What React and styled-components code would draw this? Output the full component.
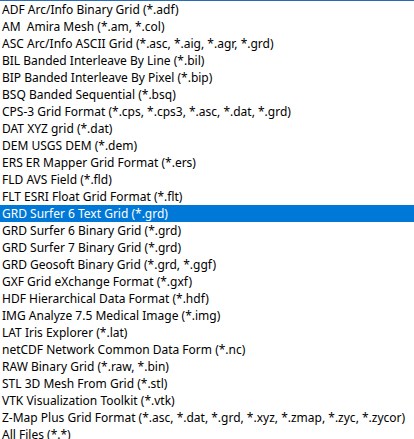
import React from 'react'
import styled, { createGlobalStyle, css } from 'styled-components'

const GlobalStyle = createGlobalStyle`
    html, body {
        margin: 0;
        padding: 0;
        background: #ffffff;
    }
`

const List = styled.ul`
    list-style: none;
    margin: 0;
    padding: 0;
    width: 414px;
    height: 439px;
    overflow: hidden;
    box-sizing: border-box;
    border-top: 1px solid #2a6cb3;
    background: #ffffff;
    font-family: "Noto Sans", "Open Sans", sans-serif;
    font-size: 12px;
`

const Item = styled.li`
    height: 17px;
    line-height: 17px;
    padding: 0 0 0 2px;
    white-space: pre;
    color: #000000;
    ${p => p.selected && css`
        background: #0078d7;
        color: #ffffff;
    `}
`

const formats = [
    'ADF Arc/Info Binary Grid (*.adf)',
    'AM  Amira Mesh (*.am, *.col)',
    'ASC Arc/Info ASCII Grid (*.asc, *.aig, *.agr, *.grd)',
    'BIL Banded Interleave By Line (*.bil)',
    'BIP Banded Interleave By Pixel (*.bip)',
    'BSQ Banded Sequential (*.bsq)',
    'CPS-3 Grid Format (*.cps, *.cps3, *.asc, *.dat, *.grd)',
    'DAT XYZ grid (*.dat)',
    'DEM USGS DEM (*.dem)',
    'ERS ER Mapper Grid Format (*.ers)',
    'FLD AVS Field (*.fld)',
    'FLT ESRI Float Grid Format (*.flt)',
    'GRD Surfer 6 Text Grid (*.grd)',
    'GRD Surfer 6 Binary Grid (*.grd)',
    'GRD Surfer 7 Binary Grid (*.grd)',
    'GRD Geosoft Binary Grid (*.grd, *.ggf)',
    'GXF Grid eXchange Format (*.gxf)',
    'HDF Hierarchical Data Format (*.hdf)',
    'IMG Analyze 7.5 Medical Image (*.img)',
    'LAT Iris Explorer (*.lat)',
    'netCDF Network Common Data Form (*.nc)',
    'RAW Binary Grid (*.raw, *.bin)',
    'STL 3D Mesh From Grid (*.stl)',
    'VTK Visualization Toolkit (*.vtk)',
    'Z-Map Plus Grid Format (*.asc, *.dat, *.grd, *.xyz, *.zmap, *.zyc, *.zycor)',
    'All Files (*.*)',
]

const App = () => {
    const selected = 12
    return (
        <>
            <GlobalStyle />
            <List>
                {formats.map((name, index) => (
                    <Item key={name} selected={index === selected}>{name}</Item>
                ))}
            </List>
        </>
    )
}

export default App
